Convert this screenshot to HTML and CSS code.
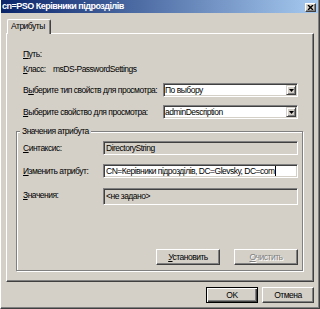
FILE: index.html
```html
<!DOCTYPE html>
<html lang="ru">
<head>
<meta charset="utf-8">
<title>cn=PSO Керівники підрозділів</title>
<link rel="stylesheet" href="styles.css">
</head>
<body>
<div class="window">
  <div class="titlebar">
    <span class="title">cn=PSO Керівники підрозділів</span>
    <span class="close"><svg width="7" height="5" viewBox="0 0 7 5"><path d="M1 0 L6 5 M6 0 L1 5" stroke="#000" stroke-width="1.4" fill="none"/></svg></span>
  </div>
  <div class="main">
    <div class="tabs"><div class="tab">Атрибуты</div></div>
    <div class="panel">
      <div class="row line"><span><u>П</u>уть:</span></div>
      <div class="row line gap4"><span class="lbl-class"><u>К</u>ласс:</span><span>msDS-PasswordSettings</span></div>
      <div class="row sel gap9"><span class="lbl-sel">В<u>ы</u>берите тип свойств для просмотра:</span><div class="combo"><span class="combo-text">По выбору</span><span class="drop"><svg width="5" height="3" viewBox="0 0 5 3"><path d="M0 0 H5 L2.5 3 Z" fill="#000"/></svg></span></div></div>
      <div class="row sel gap8"><span class="lbl-sel"><u>В</u>ыберите свойство для просмотра:</span><div class="combo"><span class="combo-text">adminDescription</span><span class="drop"><svg width="5" height="3" viewBox="0 0 5 3"><path d="M0 0 H5 L2.5 3 Z" fill="#000"/></svg></span></div></div>
      <div class="group">
        <div class="legend">Значения атрибута</div>
        <div class="frow first"><span class="flbl"><u>С</u>интаксис:</span><div class="field ro">DirectoryString</div></div>
        <div class="frow second"><span class="flbl"><u>И</u>зменить атрибут:</span><div class="field edit">CN=Керівники підрозділів, DC=Glevsky, DC=com<span class="caret"></span></div></div>
        <div class="frow third"><span class="flbl top"><u>З</u>начения:</span><div class="field ro list">&lt;не задано&gt;</div></div>
        <div class="gbtns"><button class="btn"><u>У</u>становить</button><button class="btn disabled"><u>О</u>чистить</button></div>
      </div>
    </div>
    <div class="footer"><button class="btn default">OK</button><button class="btn">Отмена</button></div>
  </div>
</div>
</body>
</html>
```
FILE: styles.css
```css
* { box-sizing: border-box; }
body {
  margin: 0;
  background: #d4d0c8;
  font-family: "Liberation Sans", Arial, sans-serif;
  font-size: 8.5px;
  letter-spacing: -0.5px;
  color: #000;
}
u { text-decoration: underline; text-underline-offset: 1px; }
.window {
  width: 320px;
  height: 309px;
  background: #d4d0c8;
  border-left: 1px solid #fff;
  border-right: 1px solid #404040;
  border-bottom: 1px solid #404040;
  box-shadow: inset -1px -1px #808080;
}
.titlebar {
  height: 13px;
  margin-right: 1px;
  background: linear-gradient(to right, #0a246a, #a6caf0);
  display: flex;
  justify-content: space-between;
  align-items: center;
  padding: 0 2px 0 1px;
}
.title {
  color: #fff;
  font-weight: bold;
  font-size: 9px;
  line-height: 13px;
}
.close {
  align-self: flex-end;
  margin-bottom: 1px;
  width: 11px;
  height: 9px;
  background: #d4d0c8;
  border: 1px solid;
  border-color: #fff #404040 #404040 #fff;
  box-shadow: inset -1px -1px #808080;
  display: flex;
  align-items: center;
  justify-content: center;
}
.close svg { display: block; }
.main { padding: 6px 5px 0 5px; }
.tabs { display: flex; padding-left: 1px; }
.tab {
  position: relative;
  z-index: 1;
  width: 44px;
  height: 15px;
  margin-bottom: -1px;
  padding-left: 3px;
  background: #d4d0c8;
  border-top: 1px solid #fff;
  border-left: 1px solid #fff;
  border-right: 1px solid #404040;
  border-radius: 2px 2px 0 0;
  box-shadow: inset -1px 0 #808080;
  line-height: 13px;
}
.panel {
  border: 1px solid;
  border-color: #fff #404040 #404040 #fff;
  box-shadow: inset -1px -1px #808080;
  padding: 14px 10px 10px 9px;
}
.row { display: flex; align-items: center; padding-left: 7px; }
.line { height: 11px; }
.gap4 { margin-top: 4px; }
.gap9 { margin-top: 9px; }
.gap8 { margin-top: 8px; }
.sel { height: 14px; }
.lbl-class { width: 30px; }
.lbl-sel { width: 140px; white-space: nowrap; }
.combo {
  width: 135px;
  height: 14px;
  background: #fff;
  border: 1px solid;
  border-color: #808080 #fff #fff #808080;
  box-shadow: inset 1px 1px #404040, inset -1px -1px #d4d0c8;
  padding: 1px;
  display: flex;
  align-items: center;
}
.combo-text { flex: 1; line-height: 10px; }
.drop {
  width: 10px;
  height: 10px;
  background: #d4d0c8;
  border: 1px solid;
  border-color: #d4d0c8 #404040 #404040 #d4d0c8;
  box-shadow: inset 1px 1px #fff, inset -1px -1px #808080;
  display: flex;
  align-items: center;
  justify-content: center;
}
.drop svg { display: block; }
.group {
  margin-top: 12px;
  border: 1px solid #808080;
  box-shadow: inset 1px 1px #fff, 1px 1px #fff;
  padding: 0 4px 5px 0;
}
.legend {
  width: fit-content;
  height: 11px;
  line-height: 11px;
  margin: -6px 0 0 3px;
  padding: 0 2px;
  background: #d4d0c8;
}
.frow { display: flex; align-items: center; padding-left: 6px; }
.first { margin-top: 4px; }
.second { margin-top: 9px; }
.third { margin-top: 10px; align-items: flex-start; }
.flbl { width: 80px; white-space: nowrap; }
.flbl.top { padding-top: 2px; line-height: 11px; }
.field {
  width: 195px;
  height: 14px;
  border: 1px solid;
  border-color: #808080 #fff #fff #808080;
  box-shadow: inset 1px 1px #404040, inset -1px -1px #d4d0c8;
  padding: 0 2px;
  display: flex;
  align-items: center;
  white-space: nowrap;
  overflow: hidden;
}
.field.ro { background: #d4d0c8; }
.field.edit { background: #fff; }
.field.list { height: 17px; align-items: flex-start; padding-top: 2px; line-height: 11px; }
.caret { display: inline-block; width: 1px; height: 10px; background: #000; margin-left: 0.5px; }
.gbtns {
  display: flex;
  justify-content: flex-end;
  gap: 14px;
  margin-top: 44px;
}
.btn {
  width: 64px;
  height: 16px;
  padding: 0;
  font: inherit;
  letter-spacing: inherit;
  color: #000;
  background: #d4d0c8;
  border: 1px solid;
  border-color: #fff #404040 #404040 #fff;
  box-shadow: inset -1px -1px #808080;
  border-radius: 0;
  line-height: 12px;
}
.btn.disabled { color: #808080; text-shadow: 1px 1px #fff; }
.btn.default {
  border: 1px solid #000;
  box-shadow: inset 1px 1px #fff, inset -1px -1px #404040, inset -2px -2px #808080;
}
.footer {
  display: flex;
  justify-content: flex-end;
  gap: 4px;
  margin-top: 5px;
}
.footer .btn { width: 52px; }
```
